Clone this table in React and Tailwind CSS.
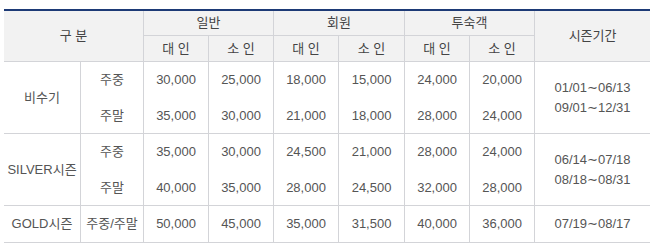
import React from "react";

const rows = [
  {
    name: "비수기",
    days: [
      { label: "주중", prices: ["30,000", "25,000", "18,000", "15,000", "24,000", "20,000"] },
      { label: "주말", prices: ["35,000", "30,000", "21,000", "18,000", "28,000", "24,000"] },
    ],
    period: ["01/01∼06/13", "09/01∼12/31"],
  },
  {
    name: "SILVER시즌",
    days: [
      { label: "주중", prices: ["35,000", "30,000", "24,500", "21,000", "28,000", "24,000"] },
      { label: "주말", prices: ["40,000", "35,000", "28,000", "24,500", "32,000", "28,000"] },
    ],
    period: ["06/14∼07/18", "08/18∼08/31"],
  },
];

const gold = ["50,000", "45,000", "35,000", "31,500", "40,000", "36,000"];

const App = () => {
  const cell = "border-r border-[#d3d4d8] text-center align-middle p-0";
  const head = "bg-[#f2f2f2] text-[#444] border-b border-[#d3d4d8]";
  return (
    <div className="w-[652px] h-[252px] bg-white pt-[9px] pl-[4px] text-[13px] text-[#555] font-['Liberation_Sans','Noto_Sans_CJK_KR',sans-serif]">
      <table className="table-fixed w-[646px] border-separate border-spacing-0 border-t-2 border-[#1d3a76]">
        <colgroup>
          <col className="w-[77px]" />
          <col className="w-[63px]" />
          <col className="w-[65px]" />
          <col className="w-[65px]" />
          <col className="w-[65px]" />
          <col className="w-[66px]" />
          <col className="w-[65px]" />
          <col className="w-[65px]" />
          <col className="w-[115px]" />
        </colgroup>
        <thead>
          <tr>
            <th colSpan={2} rowSpan={2} className={`${cell} ${head} font-normal`}>
              구 분
            </th>
            <th colSpan={2} className={`${cell} ${head} font-normal h-[25px]`}>일반</th>
            <th colSpan={2} className={`${cell} ${head} font-normal`}>회원</th>
            <th colSpan={2} className={`${cell} ${head} font-normal`}>투숙객</th>
            <th rowSpan={2} className={`text-center align-middle p-0 ${head} font-normal`}>
              시즌기간
            </th>
          </tr>
          <tr>
            {["대 인", "소 인", "대 인", "소 인", "대 인", "소 인"].map((t, i) => (
              <th key={i} className={`${cell} ${head} font-normal h-[26px]`}>
                {t}
              </th>
            ))}
          </tr>
        </thead>
        <tbody>
          {rows.map((g) =>
            g.days.map((d, i) => {
              const last = i === g.days.length - 1;
              const b = last ? "border-b border-[#d3d4d8]" : "";
              return (
                <tr key={g.name + d.label}>
                  {i === 0 && (
                    <td rowSpan={2} className={`${cell} border-b`}>
                      {g.name}
                    </td>
                  )}
                  <td className={`${cell} ${b} h-[36px]`}>{d.label}</td>
                  {d.prices.map((p, j) => (
                    <td key={j} className={`${cell} ${b}`}>
                      {p}
                    </td>
                  ))}
                  {i === 0 && (
                    <td rowSpan={2} className="text-center align-middle p-0 border-b border-[#d3d4d8] leading-[20px]">
                      {g.period.map((p) => (
                        <div key={p}>{p}</div>
                      ))}
                    </td>
                  )}
                </tr>
              );
            })
          )}
          <tr>
            <td className={`${cell} border-b h-[37px]`}>GOLD시즌</td>
            <td className={`${cell} border-b`}>주중/주말</td>
            {gold.map((p, j) => (
              <td key={j} className={`${cell} border-b`}>
                {p}
              </td>
            ))}
            <td className="text-center align-middle p-0 border-b border-[#d3d4d8]">07/19∼08/17</td>
          </tr>
        </tbody>
      </table>
    </div>
  );
};

export default App;
